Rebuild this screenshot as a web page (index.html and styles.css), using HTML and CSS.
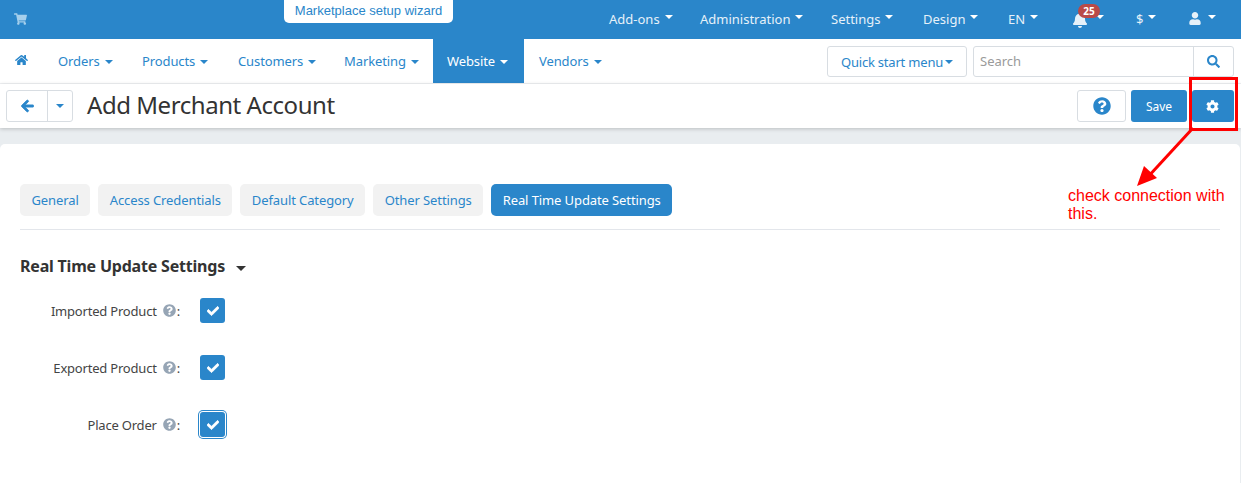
FILE: index.html
```html
<!DOCTYPE html>
<html lang="en">
<head>
<meta charset="utf-8">
<title>Add Merchant Account</title>
<link rel="stylesheet" href="styles.css">
</head>
<body>
<svg class="defs" aria-hidden="true">
  <symbol id="i-check" viewBox="0 0 512 512"><path d="M173.898 439.404l-166.4-166.4c-9.997-9.997-9.997-26.206 0-36.204l36.203-36.204c9.997-9.998 26.207-9.998 36.204 0L192 312.69 432.095 72.596c9.997-9.997 26.207-9.997 36.204 0l36.203 36.204c9.997 9.997 9.997 26.206 0 36.204l-294.4 294.401c-9.998 9.997-26.207 9.997-36.204-.001z"/></symbol>
  <symbol id="i-left" viewBox="0 0 448 512"><path d="M257.5 445.1l-22.2 22.2c-9.4 9.4-24.6 9.4-33.9 0L7 273c-9.4-9.4-9.4-24.6 0-33.9L201.4 44.7c9.4-9.4 24.6-9.4 33.9 0l22.2 22.2c9.5 9.5 9.3 25-.4 34.3L136.6 216H424c13.3 0 24 10.7 24 24v32c0 13.3-10.7 24-24 24H136.6l120.5 114.8c9.8 9.3 10 24.8.4 34.3z"/></symbol>
  <symbol id="i-search" viewBox="0 0 512 512"><path d="M505 442.7L405.3 343c-4.5-4.5-10.6-7-17-7H372c27.6-35.3 44-79.7 44-128C416 93.1 322.9 0 208 0S0 93.1 0 208s93.1 208 208 208c48.3 0 92.7-16.4 128-44v16.3c0 6.4 2.5 12.5 7 17l99.7 99.7c9.4 9.4 24.6 9.4 33.9 0l28.3-28.3c9.4-9.4 9.4-24.6.1-34zM208 336c-70.7 0-128-57.2-128-128 0-70.7 57.2-128 128-128 70.7 0 128 57.2 128 128 0 70.7-57.2 128-128 128z"/></symbol>
  <symbol id="i-q" viewBox="0 0 512 512"><path d="M504 256c0 136.997-111.043 248-248 248S8 392.997 8 256C8 119.083 119.043 8 256 8s248 111.083 248 248zM262.655 90c-54.497 0-89.255 22.957-116.549 63.758-3.536 5.286-2.353 12.415 2.715 16.258l34.699 26.31c5.205 3.947 12.621 3.008 16.665-2.122 17.864-22.658 30.113-35.797 57.303-35.797 20.429 0 45.698 13.148 45.698 32.958 0 14.976-12.363 22.667-32.534 33.976C247.128 238.528 216 254.941 216 296v4c0 6.627 5.373 12 12 12h56c6.627 0 12-5.373 12-12v-1.333c0-28.462 83.186-29.647 83.186-106.667 0-58.002-60.165-102-116.531-102zM256 338c-25.365 0-46 20.635-46 46 0 25.364 20.635 46 46 46s46-20.636 46-46c0-25.365-20.635-46-46-46z"/></symbol>
  <symbol id="i-bell" viewBox="0 0 448 512"><path d="M224 512c35.32 0 63.97-28.65 63.97-64H160.03c0 35.35 28.65 64 63.97 64zm215.39-149.71c-19.32-20.76-55.47-51.99-55.47-154.29 0-77.7-54.48-139.9-127.94-155.16V32c0-17.67-14.32-32-31.98-32s-31.98 14.33-31.98 32v20.84C118.56 68.1 64.08 130.3 64.08 208c0 102.3-36.15 133.53-55.47 154.29-6 6.45-8.66 14.16-8.61 21.71.11 16.4 12.98 32 32.1 32h383.8c19.12 0 32-15.6 32.1-32 .05-7.55-2.61-15.27-8.61-21.71z"/></symbol>
  <symbol id="i-user" viewBox="0 0 448 512"><path d="M224 256c70.7 0 128-57.3 128-128S294.7 0 224 0 96 57.3 96 128s57.3 128 128 128zm89.6 32h-16.7c-22.2 10.2-46.9 16-72.9 16s-50.6-5.8-72.9-16h-16.7C60.2 288 0 348.2 0 422.4V464c0 26.5 21.5 48 48 48h352c26.5 0 48-21.5 48-48v-41.6c0-74.2-60.2-134.4-134.4-134.4z"/></symbol>
  <symbol id="i-cog" viewBox="0 0 512 512"><path d="M487.4 315.7l-42.6-24.6c4.3-23.2 4.3-47 0-70.2l42.6-24.6c4.9-2.8 7.1-8.6 5.5-14-11.1-35.6-30-67.8-54.7-94.6-3.8-4.1-10-5.1-14.8-2.3L380.8 110c-17.9-15.4-38.5-27.3-60.8-35.1V25.8c0-5.6-3.9-10.5-9.4-11.7-36.7-8.2-74.3-7.8-109.2 0-5.5 1.2-9.4 6.1-9.4 11.7V75c-22.2 7.9-42.8 19.8-60.8 35.1L88.7 85.5c-4.9-2.8-11-1.9-14.8 2.3-24.7 26.7-43.6 58.9-54.7 94.6-1.7 5.4.6 11.2 5.5 14L67.3 221c-4.3 23.2-4.3 47 0 70.2l-42.6 24.6c-4.9 2.8-7.1 8.6-5.5 14 11.1 35.6 30 67.8 54.7 94.6 3.8 4.1 10 5.1 14.8 2.3l42.6-24.6c17.9 15.4 38.5 27.3 60.8 35.1v49.2c0 5.6 3.9 10.5 9.4 11.7 36.7 8.2 74.3 7.8 109.2 0 5.5-1.2 9.4-6.1 9.4-11.7v-49.2c22.2-7.9 42.8-19.8 60.8-35.1l42.6 24.6c4.9 2.8 11 1.9 14.8-2.3 24.7-26.7 43.6-58.9 54.7-94.6 1.5-5.5-.7-11.3-5.6-14.1zM256 336c-44.1 0-80-35.9-80-80s35.9-80 80-80 80 35.9 80 80-35.9 80-80 80z"/></symbol>
  <symbol id="i-home" viewBox="0 0 576 512"><path d="M280.37 148.26L96 300.11V464a16 16 0 0 0 16 16l112.06-.29a16 16 0 0 0 15.92-16V368a16 16 0 0 1 16-16h64a16 16 0 0 1 16 16v95.64a16 16 0 0 0 16 16.05L464 480a16 16 0 0 0 16-16V300L295.67 148.26a12.19 12.19 0 0 0-15.3 0zM571.6 251.47L488 182.56V44.05a12 12 0 0 0-12-12h-56a12 12 0 0 0-12 12v72.61L318.47 43a48 48 0 0 0-61 0L4.34 251.47a12 12 0 0 0-1.6 16.9l25.5 31A12 12 0 0 0 45.15 301l235.22-193.74a12.19 12.19 0 0 1 15.3 0L530.9 301a12 12 0 0 0 16.9-1.6l25.5-31a12 12 0 0 0-1.7-16.93z"/></symbol>
  <symbol id="i-cart" viewBox="0 0 576 512"><path d="M528.12 301.319l47.273-208C578.806 78.301 567.391 64 551.99 64H159.208l-9.166-44.81C147.758 8.021 137.93 0 126.529 0H24C10.745 0 0 10.745 0 24v16c0 13.255 10.745 24 24 24h69.883l70.248 343.435C147.325 417.1 136 435.222 136 456c0 30.928 25.072 56 56 56s56-25.072 56-56c0-15.674-6.447-29.835-16.824-40h209.647C430.447 426.165 424 440.326 424 456c0 30.928 25.072 56 56 56s56-25.072 56-56c0-22.172-12.888-41.332-31.579-50.405l5.517-24.276c3.413-15.018-8.002-29.319-23.403-29.319H218.117l-6.545-32h293.145c11.206 0 20.92-7.754 23.403-18.681z"/></symbol>
</svg>

<header class="topbar">
  <svg class="ic cart"><use href="#i-cart"/></svg>
  <div class="top-menu">
    <a class="top-item w-addons">Add-ons<i class="caret"></i></a>
    <a class="top-item w-admin">Administration<i class="caret"></i></a>
    <a class="top-item w-settings">Settings<i class="caret"></i></a>
    <a class="top-item w-design">Design<i class="caret"></i></a>
    <a class="top-item w-en">EN<i class="caret"></i></a>
    <a class="top-item w-bell"><svg class="ic bell"><use href="#i-bell"/></svg><i class="caret"></i><span class="badge">25</span></a>
    <a class="top-item w-cur">$<i class="caret"></i></a>
    <a class="top-item w-user"><svg class="ic user"><use href="#i-user"/></svg><i class="caret"></i></a>
  </div>
</header>
<a class="wizard">Marketplace setup wizard</a>

<nav class="mainnav">
  <a class="nav-item home"><svg class="ic homeic"><use href="#i-home"/></svg></a>
  <a class="nav-item w-orders">Orders<i class="caret"></i></a>
  <a class="nav-item w-products">Products<i class="caret"></i></a>
  <a class="nav-item w-customers">Customers<i class="caret"></i></a>
  <a class="nav-item w-marketing">Marketing<i class="caret"></i></a>
  <a class="nav-item active w-website">Website<i class="caret"></i></a>
  <a class="nav-item w-vendors">Vendors<i class="caret"></i></a>
  <div class="nav-tools">
    <a class="quick">Quick start menu<i class="caret tight"></i></a>
    <div class="search">
      <span class="search-input">Search</span>
      <span class="search-btn"><svg class="ic searchic"><use href="#i-search"/></svg></span>
    </div>
  </div>
</nav>

<section class="toolbar">
  <div class="backgroup">
    <a class="back"><svg class="ic leftic"><use href="#i-left"/></svg></a>
    <a class="backdrop"><i class="caret"></i></a>
  </div>
  <h1 class="title">Add Merchant Account</h1>
  <div class="actions">
    <a class="help"><svg class="ic helpic"><use href="#i-q"/></svg></a>
    <a class="btn-blue save">Save</a>
    <a class="btn-blue gear"><svg class="ic cogic"><use href="#i-cog"/></svg></a>
  </div>
</section>

<main class="card">
  <div class="tabs">
    <a class="tab">General</a>
    <a class="tab">Access Credentials</a>
    <a class="tab">Default Category</a>
    <a class="tab">Other Settings</a>
    <a class="tab current">Real Time Update Settings</a>
  </div>
  <h2 class="section">Real Time Update Settings<i class="caret dark"></i></h2>
  <div class="field">
    <span class="label">Imported Product<svg class="ic hint"><use href="#i-q"/></svg>:</span>
    <span class="check"><svg class="ic tick"><use href="#i-check"/></svg></span>
  </div>
  <div class="field">
    <span class="label">Exported Product<svg class="ic hint"><use href="#i-q"/></svg>:</span>
    <span class="check"><svg class="ic tick"><use href="#i-check"/></svg></span>
  </div>
  <div class="field">
    <span class="label">Place Order<svg class="ic hint"><use href="#i-q"/></svg>:</span>
    <span class="check focus"><svg class="ic tick"><use href="#i-check"/></svg></span>
  </div>
</main>

<div class="mark-box"></div>
<svg class="mark-arrow" viewBox="0 0 70 60"><path class="arrow-line" d="M56 2 L9 53"/><path class="arrow-head" d="M0 60 L7 40 L20 52 Z"/></svg>
<p class="mark-note">check connection with this.</p>
</body>
</html>
```
FILE: styles.css
```css
* { box-sizing: border-box; }
html, body { margin: 0; padding: 0; }
body {
  width: 1241px;
  height: 483px;
  overflow: hidden;
  background: #e9edf0;
  font-family: "Noto Sans", "Open Sans", sans-serif;
  font-size: 13px;
  color: #333;
  position: relative;
}
.defs { position: absolute; width: 0; height: 0; }
.ic { display: block; fill: currentColor; flex: none; }
.caret {
  display: inline-block;
  width: 0; height: 0;
  margin-left: 5px;
  border-left: 4px solid transparent;
  border-right: 4px solid transparent;
  border-top: 4px solid currentColor;
  vertical-align: 2px;
}
.caret.tight { margin-left: 2px; }
.caret.dark { color: #333; margin-left: 11px; border-left-width: 5px; border-right-width: 5px; border-top-width: 5px; vertical-align: 1px; }

.topbar {
  height: 39px;
  background: #2a86ca;
  display: flex;
  align-items: center;
  color: #e6f1f9;
}
.cart { width: 13px; height: 12px; margin: 0 0 1px 14px; color: #a5cfec; }
.top-menu { display: flex; margin-left: auto; height: 100%; align-items: center; padding-bottom: 2px; }
.top-item { display: flex; align-items: center; position: relative; line-height: 18px; white-space: nowrap; }
.top-item .caret { margin-left: 5px; vertical-align: 0; color: #fff; margin-top: -3px; }
.w-addons { width: 91px; }
.w-admin { width: 131px; }
.w-settings { width: 92px; }
.w-design { width: 85px; }
.w-en { width: 65px; }
.w-bell { width: 63px; }
.w-cur { width: 53px; }
.w-user { width: 52px; }
.bell { width: 14px; height: 16px; margin-top: 2px; color: #e6f1f9; }
.user { width: 12px; height: 13px; }
.w-user .caret { margin-left: 7px; }
.w-bell .caret { margin-left: 9px; }
.badge {
  position: absolute;
  left: 5px; top: -6px;
  width: 22px; height: 14px;
  border-radius: 7px;
  background: #b94a48;
  color: #fff;
  font-size: 10px;
  font-weight: 700;
  line-height: 14px;
  text-align: center;
}
.wizard {
  position: absolute;
  left: 284px; top: 0;
  width: 169px; height: 23px;
  background: #fff;
  border-radius: 0 0 5px 5px;
  color: #2a86ca;
  font-family: "Liberation Sans", Arial, sans-serif;
  font-size: 13px;
  line-height: 22px;
  text-align: center;
}

.mainnav {
  height: 45px;
  background: #fff;
  display: flex;
  align-items: stretch;
  border-bottom: 1px solid #f0f2f4;
  color: #2a86ca;
}
.nav-item { display: flex; align-items: center; padding: 0 0 0 14px; white-space: nowrap; letter-spacing: -.1px; }
.nav-item .caret { margin-left: 5px; margin-top: 1px; }
.home { padding: 0 0 0 15px; width: 44px; }
.homeic { width: 13px; height: 12px; margin-top: -2px; }
.w-orders { width: 84px; }
.w-products { width: 96px; }
.w-customers { width: 106px; }
.w-marketing { width: 89px; }
.w-website { width: 91px; margin-left: 14px; }
.w-vendors { padding-left: 15px; }
.active { background: #2a86ca; color: #fff; }
.nav-tools { margin-left: auto; display: flex; align-items: flex-start; padding: 7px 7px 0 0; }
.quick {
  width: 140px; height: 31px;
  border: 1px solid #d8dde2;
  border-radius: 3px;
  display: flex; align-items: center; justify-content: center;
  white-space: nowrap;
  letter-spacing: -.2px;
}
.search {
  width: 261px; height: 31px;
  margin-left: 6px;
  border: 1px solid #d8dde2;
  border-radius: 3px;
  display: flex;
}
.search-input { flex: 1; padding-left: 6px; line-height: 29px; color: #9a9a9a; }
.search-btn { width: 40px; border-left: 1px solid #d8dde2; display: flex; align-items: center; justify-content: center; }
.searchic { width: 13px; height: 13px; }

.toolbar {
  height: 44px;
  background: #fff;
  display: flex;
  align-items: center;
  padding: 0 7px 0 6px;
  box-shadow: 0 1px 4px rgba(0,0,0,.2);
  position: relative;
}
.backgroup { display: flex; width: 67px; height: 32px; border: 1px solid #d8dde2; border-radius: 3px; color: #2a86ca; }
.back { width: 41px; border-right: 1px solid #d8dde2; display: flex; align-items: center; justify-content: center; }
.leftic { width: 13px; height: 14px; stroke: currentColor; stroke-width: 30; }
.backdrop { flex: 1; display: flex; align-items: center; justify-content: center; }
.backdrop .caret { margin: 0; }
.title { margin: -2px 0 0 14px; font-size: 24px; font-weight: 400; color: #333; line-height: 32px; white-space: nowrap; letter-spacing: -.45px; }
.actions { margin-left: auto; display: flex; gap: 5px; }
.help { width: 49px; height: 32px; border: 1px solid #d8dde2; border-radius: 3px; display: flex; align-items: center; justify-content: center; color: #2a86ca; }
.helpic { width: 18px; height: 18px; }
.btn-blue { height: 32px; background: #2a86ca; color: #fff; border-radius: 3px; display: flex; align-items: center; justify-content: center; }
.save { width: 56px; font-size: 12px; }
.gear { width: 42px; padding-right: 2px; }
.cogic { width: 13px; height: 13px; }

.card {
  margin: 16px 1px 0 0;
  height: 340px;
  background: #fff;
  border-radius: 5px 5px 0 0;
  padding: 40px 20px 0 20px;
}
.tabs { display: flex; gap: 8px; height: 46px; border-bottom: 1px solid #e3e6eb; align-items: flex-start; }
.tab {
  height: 32px;
  padding: 0 11.5px;
  background: #f2f2f2;
  border-radius: 5px;
  color: #2a86ca;
  line-height: 32px;
  white-space: nowrap;
  letter-spacing: -.1px;
}
.tab.current { background: #2a86ca; color: #fff; }
.section { margin: 25px 0 0; font-size: 16px; font-weight: 700; line-height: 22px; color: #333; white-space: nowrap; letter-spacing: -.2px; }
.field { display: flex; align-items: center; height: 25px; margin-top: 32px; }
.section + .field { margin-top: 21px; }
.label { width: 160px; display: flex; align-items: center; justify-content: flex-end; white-space: nowrap; color: #444; letter-spacing: -.2px; }
.hint { width: 13px; height: 13px; margin: 0 1px 0 6px; color: #96a5b5; }
.check {
  margin-left: 20px;
  width: 25px; height: 25px;
  background: #2a86ca;
  border-radius: 3px;
  display: flex; align-items: center; justify-content: center;
  color: #fff;
}
.check.focus { box-shadow: 0 0 0 1px #fff, 0 0 0 2px #2a86ca; }
.tick { width: 12px; height: 12px; stroke: currentColor; stroke-width: 30; }

.mark-box { position: absolute; left: 1189px; top: 77px; width: 49px; height: 54px; border: 3px solid #f00; }
.mark-arrow { position: absolute; left: 1137px; top: 126px; width: 70px; height: 60px; overflow: visible; }
.arrow-line { stroke: #f00; stroke-width: 3; fill: none; }
.arrow-head { fill: #f00; }
.mark-note {
  position: absolute;
  left: 1068px; top: 187px;
  width: 170px;
  margin: 0;
  color: #f00;
  font-family: "Liberation Sans", Arial, sans-serif;
  font-size: 16px;
  line-height: 18px;
}
```
